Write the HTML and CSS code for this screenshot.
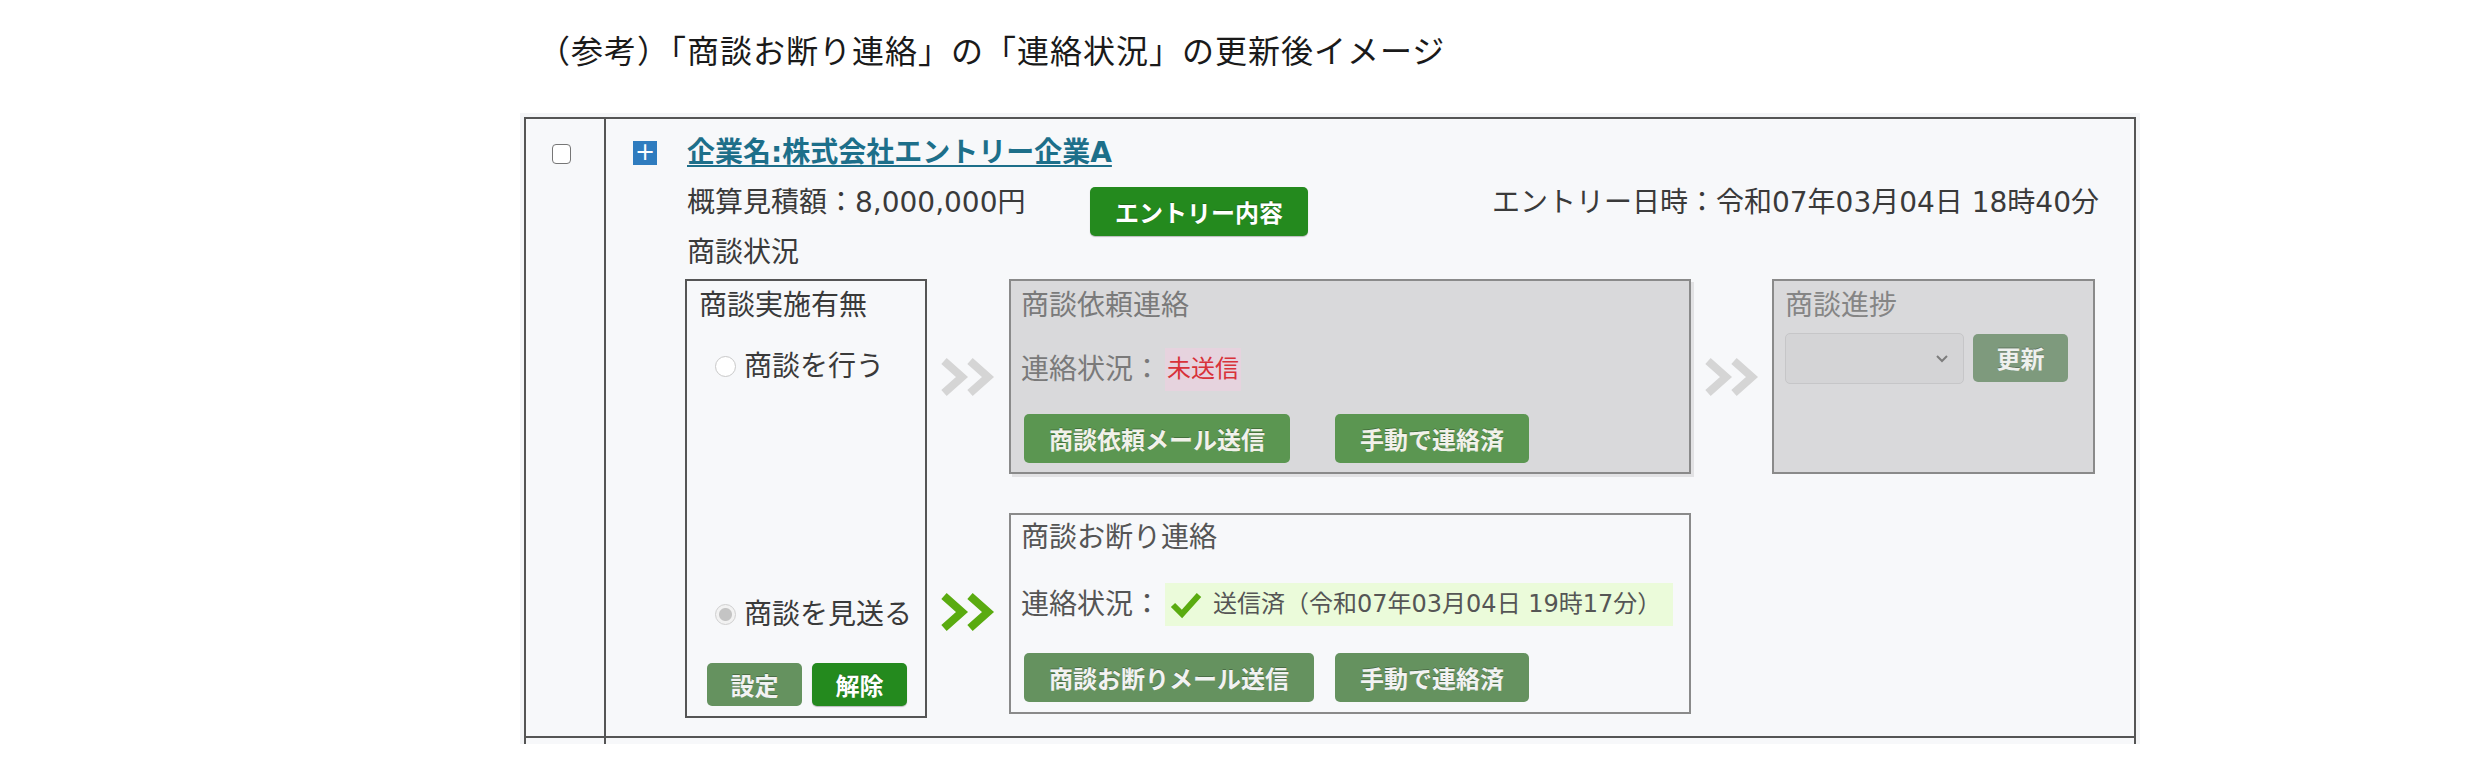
FILE: index.html
```html
<!DOCTYPE html>
<html lang="ja">
<head>
    <meta charset="UTF-8">
    <title>商談お断り連絡 更新後イメージ</title>
    <link rel="stylesheet" href="styles.css">
</head>
<body>
    <p class="caption">（参考）「商談お断り連絡」の「連絡状況」の更新後イメージ</p>

    <div class="table-wrap">
        <div class="entry-row">
            <div class="check-cell"><input type="checkbox" class="check"></div>
            <div class="main-cell">
                <div class="company">
                    <span class="toggle">+</span>
                    <a href="#" class="company-link">企業名:株式会社エントリー企業A</a>
                </div>
                <div class="detail">
                    <div class="summary">
                        <span class="amount">概算見積額：8,000,000円</span>
                        <button class="btn btn-main btn-entry">エントリー内容</button>
                        <span class="entry-date">エントリー日時：令和07年03月04日 18時40分</span>
                    </div>
                    <div class="section-label">商談状況</div>

                    <div class="flow">
                        <!-- 商談実施有無 -->
                        <div class="box box-choice">
                            <div class="box-title">商談実施有無</div>
                            <label class="radio-line first"><input type="radio" class="radio" name="meet">商談を行う</label>
                            <label class="radio-line last"><input type="radio" class="radio" name="meet" checked disabled>商談を見送る</label>
                            <div class="choice-buttons">
                                <button class="btn btn-off btn-small">設定</button>
                                <button class="btn btn-main btn-small">解除</button>
                            </div>
                        </div>

                        <div class="arrow-cell top-left">
                            <svg class="arrows" viewBox="0 0 54 38" width="54" height="38"><polyline points="3,3 21,19 3,35" /><polyline points="29,3 47,19 29,35" /></svg>
                        </div>

                        <!-- 商談依頼連絡 (無効) -->
                        <div class="box box-disabled box-request">
                            <div class="box-title">商談依頼連絡</div>
                            <div class="status-line">連絡状況：<span class="badge badge-unsent">未送信</span></div>
                            <div class="box-buttons">
                                <button class="btn btn-dim">商談依頼メール送信</button>
                                <button class="btn btn-dim">手動で連絡済</button>
                            </div>
                        </div>

                        <div class="arrow-cell top-right">
                            <svg class="arrows" viewBox="0 0 54 38" width="54" height="38"><polyline points="3,3 21,19 3,35" /><polyline points="29,3 47,19 29,35" /></svg>
                        </div>

                        <!-- 商談進捗 (無効) -->
                        <div class="box box-disabled box-progress">
                            <div class="box-title">商談進捗</div>
                            <div class="progress-controls">
                                <span class="select-box">
                                    <svg viewBox="0 0 14 10" width="14" height="10"><polyline points="2,2 7,7 12,2" /></svg>
                                </span>
                                <button class="btn btn-grey">更新</button>
                            </div>
                        </div>

                        <div class="arrow-cell bottom-left active">
                            <svg class="arrows" viewBox="0 0 54 38" width="54" height="38"><polyline points="3,3 21,19 3,35" /><polyline points="29,3 47,19 29,35" /></svg>
                        </div>

                        <!-- 商談お断り連絡 -->
                        <div class="box box-decline">
                            <div class="box-title">商談お断り連絡</div>
                            <div class="status-line">連絡状況：<span class="badge badge-sent"><svg class="check-icon" viewBox="0 0 34 28" width="34" height="28"><polyline points="4,14 13,23 30,4" /></svg>送信済（令和07年03月04日 19時17分）</span></div>
                            <div class="box-buttons">
                                <button class="btn btn-off">商談お断りメール送信</button>
                                <button class="btn btn-off">手動で連絡済</button>
                            </div>
                        </div>
                    </div>
                </div>
            </div>
        </div>
        <div class="entry-row tail">
            <div class="check-cell"></div>
            <div class="main-cell"></div>
        </div>
    </div>
</body>
</html>
```

FILE: styles.css
```css
body {
    margin: 0;
    background: #fff;
    font-family: "DejaVu Sans", "Noto Sans CJK JP", sans-serif;
    font-size: 28px;
    line-height: 39px;
    color: #3a3a3a;
}
.caption {
    margin: 0;
    padding: 31px 0 0 538px;
    font-family: "Noto Sans", "Noto Sans CJK JP", sans-serif;
    font-size: 32px;
    line-height: 40px;
    letter-spacing: 1px;
    color: #1a1a1a;
}
.table-wrap {
    margin: 42px 0 0 520px;
    width: 1612px;
    padding: 4px 4px 0;
    background: #f4f5f7;
}
.entry-row {
    display: flex;
    background: #f7f8fa;
    border: 2px solid #555;
    border-bottom: none;
}
.entry-row.tail {
    height: 6px;
    border-top: 2px solid #555;
}
.check-cell {
    flex: 0 0 80px;
    padding: 25px 0 0 26px;
    box-sizing: border-box;
    border-right: 2px solid #555;
}
.check {
    appearance: none;
    display: block;
    width: 19px;
    height: 20px;
    margin: 0;
    border: 1.5px solid #767676;
    border-radius: 4px;
    background: #fff;
}
.main-cell {
    flex: 1;
    padding: 14px 35px 18px 27px;
}
.company {
    display: flex;
    align-items: center;
    gap: 30px;
}
.toggle {
    width: 24px;
    height: 24px;
    background: #2f7cbf;
    color: #fff;
    font-size: 24px;
    line-height: 22px;
    text-align: center;
}
.company-link {
    font-weight: bold;
    color: #1d6f8a;
    text-decoration: underline;
    text-underline-offset: 3px;
}
.detail {
    margin-left: 54px;
}
.summary {
    display: flex;
    align-items: flex-start;
    margin-top: 11px;
}
.amount {
    min-width: 403px;
}
.entry-date {
    margin-left: auto;
}
.section-label {
    margin-top: 1px;
}

/* buttons */
.btn {
    height: 49px;
    padding: 0 25px;
    border: none;
    border-radius: 5px;
    font-family: "Noto Sans CJK JP", sans-serif;
    font-size: 24px;
    font-weight: bold;
    line-height: 49px;
    color: #fff;
    white-space: nowrap;
    text-shadow: 0 -1px 0 rgba(0, 0, 0, 0.25);
}
.btn-entry {
    margin-top: 4px;
    margin-bottom: -4px;
}
.btn-main {
    background: #248a1e;
    box-shadow: 0 1px 1px rgba(0, 0, 0, 0.25);
}
.btn-off {
    background: #65925f;
    color: #f2f2f2;
}
.btn-dim {
    background: #5b9651;
    color: #f1f1ea;
}
.btn-grey {
    background: #7e9a7d;
    color: #eef0ee;
    height: 48px;
    line-height: 48px;
}
.btn-small {
    height: 43px;
    line-height: 43px;
    width: 95px;
    padding: 0;
}

/* flow */
.flow {
    display: grid;
    grid-template-columns: 242px 82px 682px 81px 323px;
    grid-template-rows: auto 205px;
    row-gap: 39px;
    margin: 7px 0 0 -2px;
}
.box {
    border: 2px solid #8a8a8a;
    box-sizing: border-box;
}
.box-title {
    line-height: 39px;
}
.box-choice {
    grid-column: 1;
    grid-row: 1 / span 2;
    border-color: #555;
    padding: 5px 12px 10px;
    display: flex;
    flex-direction: column;
}
.radio-line {
    display: flex;
    align-items: center;
    gap: 8px;
    margin-left: 16px;
}
.radio-line.first {
    margin-top: 22px;
}
.radio-line.last {
    margin-top: auto;
}
.radio {
    appearance: none;
    width: 21px;
    height: 21px;
    margin: 0;
    border: 1px solid #c9c9c9;
    border-radius: 50%;
    background: #fff;
}
.radio:checked {
    border-color: #cfcfcf;
    background: radial-gradient(circle, #c4c4c4 0 6px, #f2f2f2 7px);
}
.choice-buttons {
    display: flex;
    gap: 10px;
    margin: 29px 0 0 8px;
}

.arrow-cell {
    display: flex;
    align-items: center;
    justify-content: center;
}
.arrows polyline {
    fill: none;
    stroke: #d5d5d5;
    stroke-width: 8;
}
.arrow-cell.active .arrows polyline {
    stroke: #5aab10;
}
.top-left { grid-column: 2; grid-row: 1; }
.top-right { grid-column: 4; grid-row: 1; }
.bottom-left { grid-column: 2; grid-row: 2; align-self: start; height: 198px; }

.box-disabled {
    background: #d9d9db;
    color: #7a7a7a;
}
.box-request {
    grid-column: 3;
    grid-row: 1;
    align-self: start;
    padding: 5px 10px 9px;
    box-shadow: 3px 3px 0 #e2e2e4;
}
.box-progress {
    grid-column: 5;
    grid-row: 1;
    padding: 5px 11px;
    color: #858585;
}
.box-decline {
    grid-column: 3;
    grid-row: 2;
    align-self: start;
    padding: 3px 10px 10px;
    color: #555;
}
.box-request .status-line {
    margin-top: 23px;
}
.box-decline .status-line {
    margin-top: 26px;
}
.status-line {
    display: flex;
    align-items: center;
    white-space: nowrap;
}
.badge {
    display: inline-flex;
    align-items: center;
    padding: 2px 2px;
    margin-left: 4px;
    font-size: 24px;
}
.badge-unsent {
    background: #e6d3de;
    color: #d8323a;
}
.badge-sent {
    background: #ebfbda;
    padding: 2px 12px 2px 4px;
    color: #555;
    gap: 10px;
}
.check-icon polyline {
    fill: none;
    stroke: #5aab10;
    stroke-width: 6;
}
.box-buttons {
    display: grid;
    grid-template-columns: 311px auto;
    justify-content: start;
    justify-items: start;
    margin: 23px 0 0 3px;
}
.box-decline .box-buttons {
    margin-top: 27px;
}
.progress-controls {
    display: flex;
    align-items: flex-start;
    gap: 9px;
    margin-top: 8px;
}
.select-box {
    width: 179px;
    height: 51px;
    box-sizing: border-box;
    display: flex;
    align-items: center;
    justify-content: flex-end;
    padding-right: 14px;
    background: #d4d4d6;
    border: 1px solid #c6c6c8;
    border-radius: 5px;
}
.select-box polyline {
    fill: none;
    stroke: #7d7d7d;
    stroke-width: 2;
}
.progress-controls .btn-grey {
    width: 95px;
    padding: 0;
    margin-top: 1px;
}
```
